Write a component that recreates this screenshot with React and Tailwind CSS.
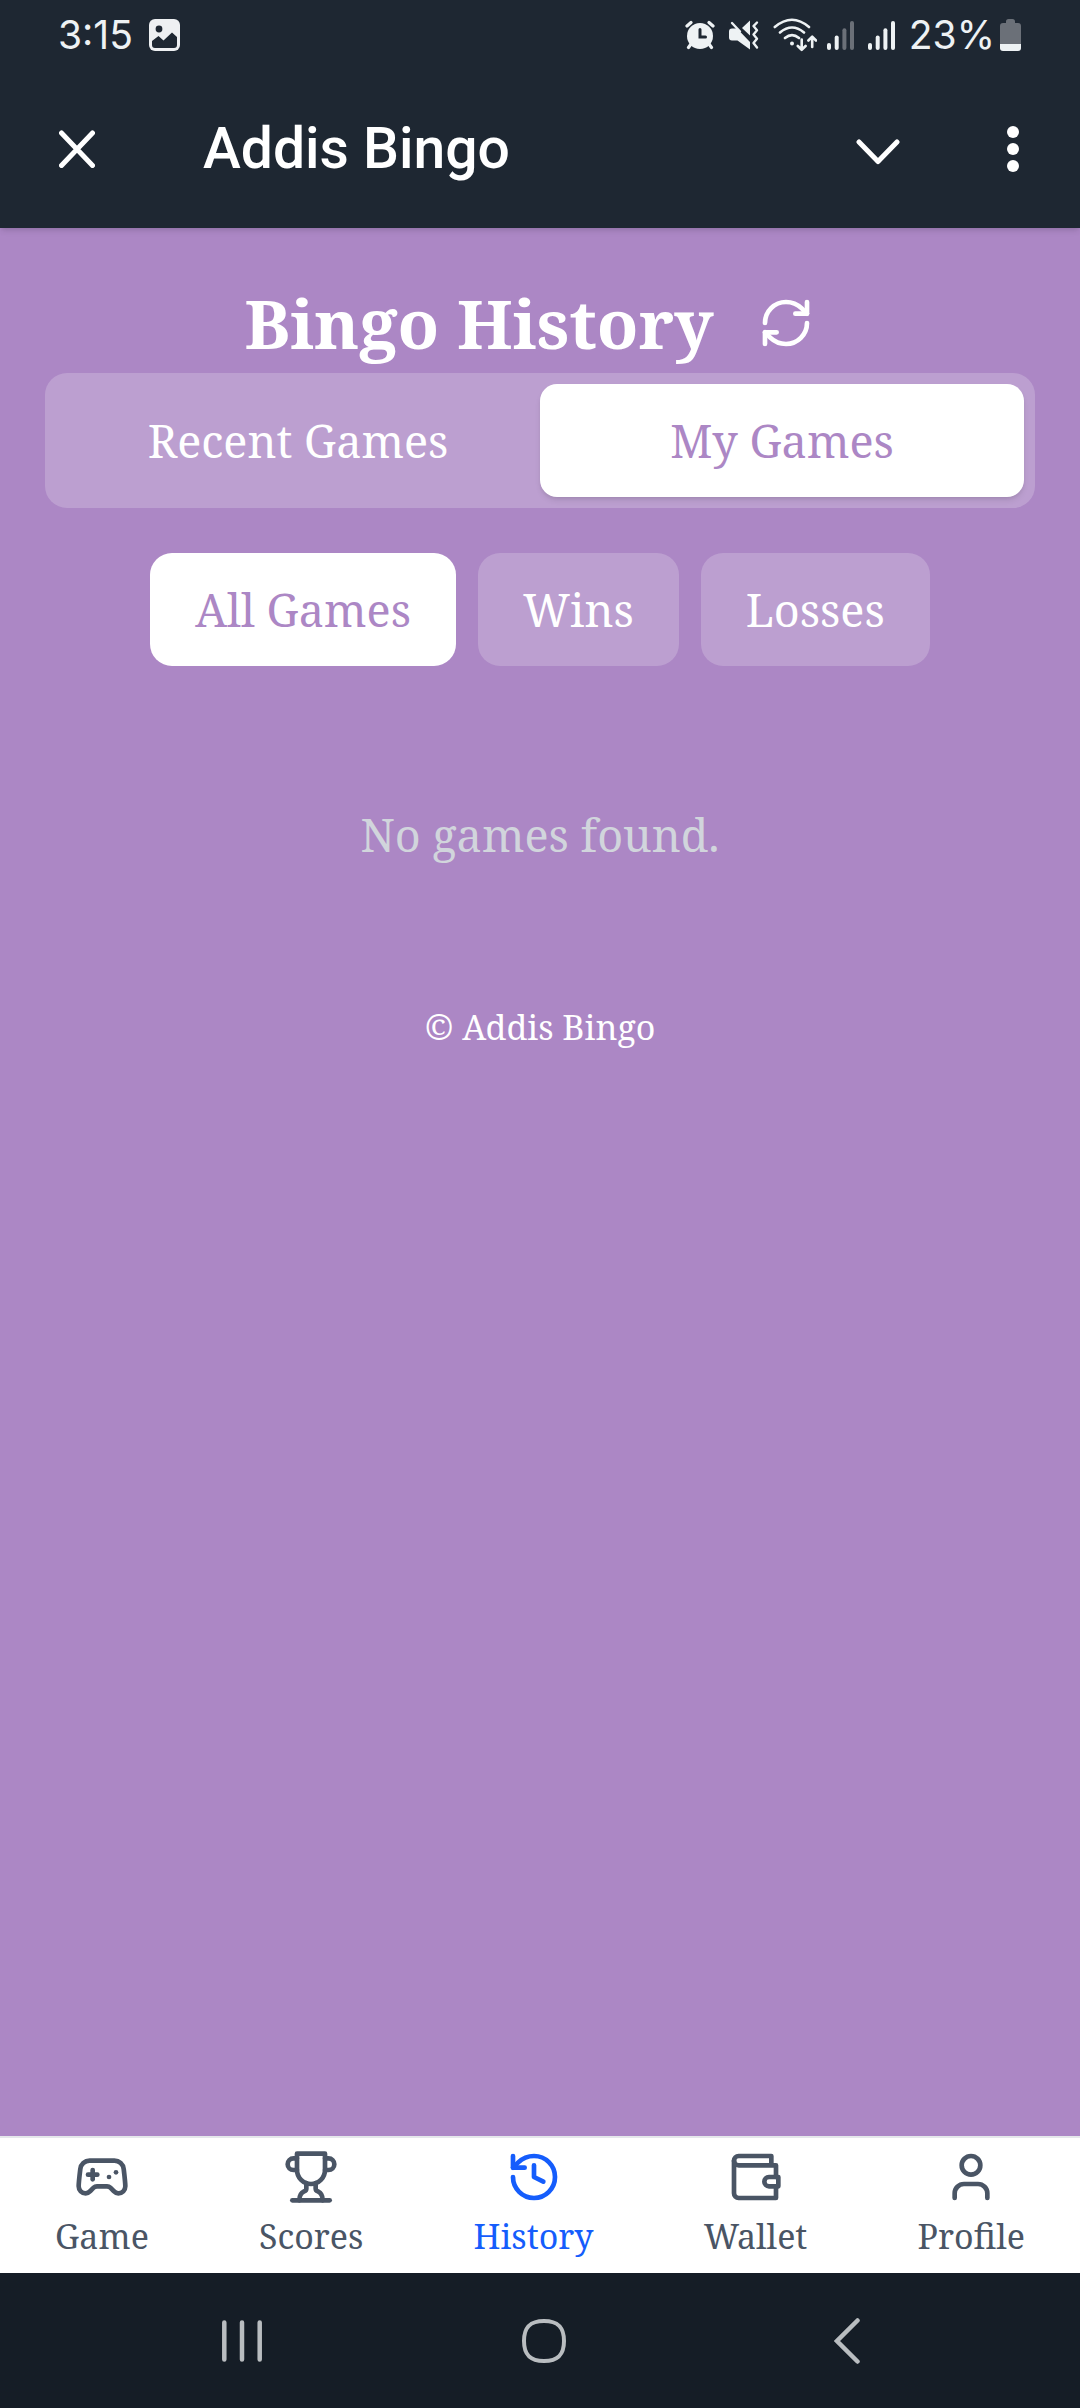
import { useState } from 'react';
import { Gamepad2, History, RefreshCw, User } from 'lucide-react';

function PictureIcon() {
  return (
    <svg width="31" height="32" viewBox="0 0 31 32" aria-hidden="true">
      <rect width="31" height="32" rx="6" fill="#eef0f2" />
      <circle cx="10" cy="10" r="3.4" fill="#1e2732" />
      <path d="M3 22l6.5-5 5 4.5 8.5-8 5 4.500V26a3 3 0 0 1-3 3H6a3 3 0 0 1-3-3z" fill="#1e2732" />
    </svg>
  );
}

function AlarmIcon() {
  return (
    <svg width="30" height="30" viewBox="0 0 30 30" fill="none" strokeLinecap="round" aria-hidden="true">
      <circle cx="15" cy="16" r="13" fill="#eef2f4" />
      <path d="M2 6l4-3.500M28 6l-4-3.500M6 24l-2.500 3.500M24 24l2.500 3.500" stroke="#eef2f4" strokeWidth="3.200" />
      <path d="M15 9.500v7.500h5.500" stroke="#1e2732" strokeWidth="3" />
    </svg>
  );
}

function MuteVibrateIcon() {
  return (
    <svg width="30" height="30" viewBox="0 0 30 30" fill="none" strokeLinecap="round" strokeLinejoin="round" aria-hidden="true">
      <path d="M21 .5v15L13 8z" fill="#eef2f4" />
      <path d="M8 8.500L21 22v7.500L8.500 20.500H3a3 3 0 0 1-3-3v-6a3 3 0 0 1 3-3z" fill="#eef2f4" />
      <path d="M3 3l8 8.500" stroke="#eef2f4" strokeWidth="2.400" />
      <path d="M28 2.500l-3.500 3.600 3.500 4.200-3.500 4.200 3.500 4.200-3.500 4.200 3.500 4.600" stroke="#eef2f4" strokeWidth="2.400" />
    </svg>
  );
}

function WifiIcon() {
  return (
    <svg width="44" height="34" viewBox="0 0 44 34" fill="none" stroke="#eef2f4" strokeWidth="2.600" strokeLinecap="round" strokeLinejoin="round" aria-hidden="true">
      <path d="M1.800 9Q19-5.500 36 9M7 14.500Q19 4.500 31 14.500M12 20Q19 14.200 26 20" />
      <circle cx="19" cy="25.500" r="2" fill="#eef2f4" stroke="none" />
      <path d="M28.700 21.500V31.500M24.800 28l3.900 3.800 3.900-3.800M39.200 29V19M35.400 22.500l3.800-3.800 3.800 3.800" />
    </svg>
  );
}

function SignalIcon({ bars }) {
  const shape = [[0, 22], [7.7, 14.5], [15.4, 7.2], [23, 0]];
  return (
    <svg width="27" height="29" viewBox="0 0 27 29" aria-hidden="true">
      {shape.map(([x, y], i) => (
        <rect key={x} x={x} y={y} width="4" height={29 - y} rx="2" fill={i < bars ? '#eef2f4' : '#6b7078'} />
      ))}
    </svg>
  );
}

function BatteryIcon() {
  return (
    <svg width="21" height="32" viewBox="0 0 21 32" aria-hidden="true">
      <path d="M6 4V2.500A2.500 2.500 0 0 1 8.500 0h4A2.500 2.500 0 0 1 15 2.500V4h3a3 3 0 0 1 3 3v18H0V7a3 3 0 0 1 3-3z" fill="#6b7078" />
      <path d="M0 25h21v4a3 3 0 0 1-3 3H3a3 3 0 0 1-3-3z" fill="#eef2f4" />
    </svg>
  );
}

const outline = {
  width: 56,
  height: 56,
  viewBox: '0 0 24 24',
  fill: 'none',
  stroke: 'currentColor',
  strokeWidth: 2,
  strokeLinecap: 'round',
  strokeLinejoin: 'round',
  'aria-hidden': true,
};

function TrophyIcon() {
  return (
    <svg {...outline}>
      <path d="M6 9H4.500a2.500 2.500 0 0 1 0-5H6" />
      <path d="M18 9h1.500a2.500 2.500 0 0 0 0-5H18" />
      <path d="M4 22h16" />
      <path d="M10 14.660V17c0 .55-.47.98-.97 1.210C7.850 18.750 7 20.240 7 22" />
      <path d="M14 14.660V17c0 .55.47.98.97 1.210C16.150 18.750 17 20.240 17 22" />
      <path d="M18 2H6v7a6 6 0 0 0 12 0V2Z" />
    </svg>
  );
}

function WalletIcon() {
  return (
    <svg {...outline}>
      <path d="M21 12V7H5a2 2 0 0 1 0-4h14v4" />
      <path d="M3 5v14a2 2 0 0 0 2 2h16v-5" />
      <path d="M18 12a2 2 0 0 0 0 4h4v-4Z" />
    </svg>
  );
}

const tabs = ['Recent Games', 'My Games'];
const filters = ['All Games', 'Wins', 'Losses'];
const links = [
  { label: 'Game', icon: <Gamepad2 size={56} /> },
  { label: 'Scores', icon: <TrophyIcon /> },
  { label: 'History', icon: <History size={56} />, current: true },
  { label: 'Wallet', icon: <WalletIcon /> },
  { label: 'Profile', icon: <User size={56} /> },
];

function StatusBar() {
  return (
    <div className="flex h-[70px] items-center justify-between pr-[59px] pl-[58px] font-['Inter',sans-serif] text-[39px] leading-[48px] text-[#eef2f4]">
      <div className="flex items-center gap-[16px]">
        <span>3:15</span>
        <PictureIcon />
      </div>
      <div className="flex items-center gap-[14px]">
        <AlarmIcon />
        <MuteVibrateIcon />
        <div className="flex items-center gap-[10px]">
          <WifiIcon />
          <SignalIcon bars={2} />
        </div>
        <SignalIcon bars={4} />
        <div className="flex items-center gap-[5px]">
          <span>23%</span>
          <BatteryIcon />
        </div>
      </div>
    </div>
  );
}

function TitleBar() {
  return (
    <div className="flex h-[158px] items-center pr-[61px] pl-[59px] text-white">
      <button type="button" aria-label="Close">
        <svg width="36" height="38" viewBox="0 0 36 38" fill="none" stroke="currentColor" strokeWidth="5" strokeLinecap="round" aria-hidden="true">
          <path d="M2.500 3l31 32.500M33.500 3l-31 32.500" />
        </svg>
      </button>
      <div className="ml-[108px] flex-1 font-['Roboto',sans-serif] text-[57px] leading-[68px] font-medium">Addis Bingo</div>
      <div className="flex items-center gap-[107px]">
        <button type="button" aria-label="Minimize" className="pt-[5px]">
          <svg width="44" height="26" viewBox="0 0 44 26" fill="none" stroke="currentColor" strokeWidth="5" strokeLinecap="round" strokeLinejoin="round" aria-hidden="true">
            <path d="M3 3l19 19.500L41 3" />
          </svg>
        </button>
        <button type="button" aria-label="More options">
          <svg width="12" height="46" viewBox="0 0 12 46" fill="currentColor" aria-hidden="true">
            <circle cx="6" cy="6" r="6" />
            <circle cx="6" cy="23" r="6" />
            <circle cx="6" cy="40" r="6" />
          </svg>
        </button>
      </div>
    </div>
  );
}

export default function App() {
  const [tab, setTab] = useState('My Games');
  const [filter, setFilter] = useState('All Games');

  return (
    <div className="flex min-h-screen flex-col bg-[#ac87c5] font-['Noto_Serif','DejaVu_Serif_Condensed',serif]">
      <header className="bg-[#1e2732] shadow-md">
        <StatusBar />
        <TitleBar />
      </header>

      <main className="flex flex-1 flex-col px-[45px] pt-[45px]">
        <div className="flex items-center justify-center gap-[22px] text-white">
          <h1 className="text-[68px] leading-[90px] font-bold">Bingo History</h1>
          <button type="button" aria-label="Refresh" className="p-[22px]">
            <RefreshCw size={56} />
          </button>
        </div>

        <div className="flex rounded-[22px] bg-white/20 p-[11px]">
          {tabs.map((name) => (
            <button
              key={name}
              type="button"
              aria-pressed={tab === name}
              onClick={() => setTab(name)}
              className={`flex-1 rounded-[17px] py-[22px] text-[45px] leading-[69px] ${tab === name ? 'bg-white text-[#ac87c5] shadow-md' : 'text-white'}`}
            >
              {name}
            </button>
          ))}
        </div>

        <div className="mt-[45px] flex justify-center gap-[22px]">
          {filters.map((name) => (
            <button
              key={name}
              type="button"
              aria-pressed={filter === name}
              onClick={() => setFilter(name)}
              className={`rounded-[22px] px-[45px] py-[22px] text-[45px] leading-[69px] ${filter === name ? 'bg-white text-[#ac87c5]' : 'bg-white/20 text-white'}`}
            >
              {name}
            </button>
          ))}
        </div>

        <p className="py-[134px] text-center text-[45px] leading-[69px] text-gray-300">No games found.</p>
        <p className="text-center text-[34px] leading-[48px] text-white">© Addis Bingo</p>
      </main>

      <nav aria-label="Main" className="flex justify-around border-t-2 border-gray-200 bg-white pt-[11px] pb-[13px]">
        {links.map(({ label, icon, current }) => (
          <a
            key={label}
            href={`#${label.toLowerCase()}`}
            aria-current={current ? 'page' : undefined}
            className={`flex flex-col items-center gap-[7px] text-[34px] leading-[48px] ${current ? 'text-blue-600' : 'text-gray-600'}`}
          >
            {icon}
            <span>{label}</span>
          </a>
        ))}
      </nav>

      <div className="flex h-[135px] items-center bg-[#151d26] pr-[82px] pl-[91px] text-[#b9bdc0]">
        <button type="button" aria-label="Recent apps" className="flex flex-1 justify-center">
          <svg width="40" height="42" viewBox="0 0 40 42" fill="none" stroke="currentColor" strokeWidth="4.500" strokeLinecap="round" aria-hidden="true">
            <path d="M2.300 2.500v37M20 2.500v37M37.700 2.500v37" />
          </svg>
        </button>
        <button type="button" aria-label="Home" className="flex flex-1 justify-center">
          <svg width="44" height="44" viewBox="0 0 44 44" fill="none" stroke="currentColor" strokeWidth="4" aria-hidden="true">
            <path d="M22 2C36 2 42 8 42 22S36 42 22 42 2 36 2 22 8 2 22 2Z" />
          </svg>
        </button>
        <button type="button" aria-label="Back" className="flex flex-1 justify-center">
          <svg width="26" height="46" viewBox="0 0 26 46" fill="none" stroke="currentColor" strokeWidth="4.500" strokeLinecap="round" aria-hidden="true">
            <path d="M23.500 2.500L3 23l20.500 20.500" />
          </svg>
        </button>
      </div>
    </div>
  );
}
